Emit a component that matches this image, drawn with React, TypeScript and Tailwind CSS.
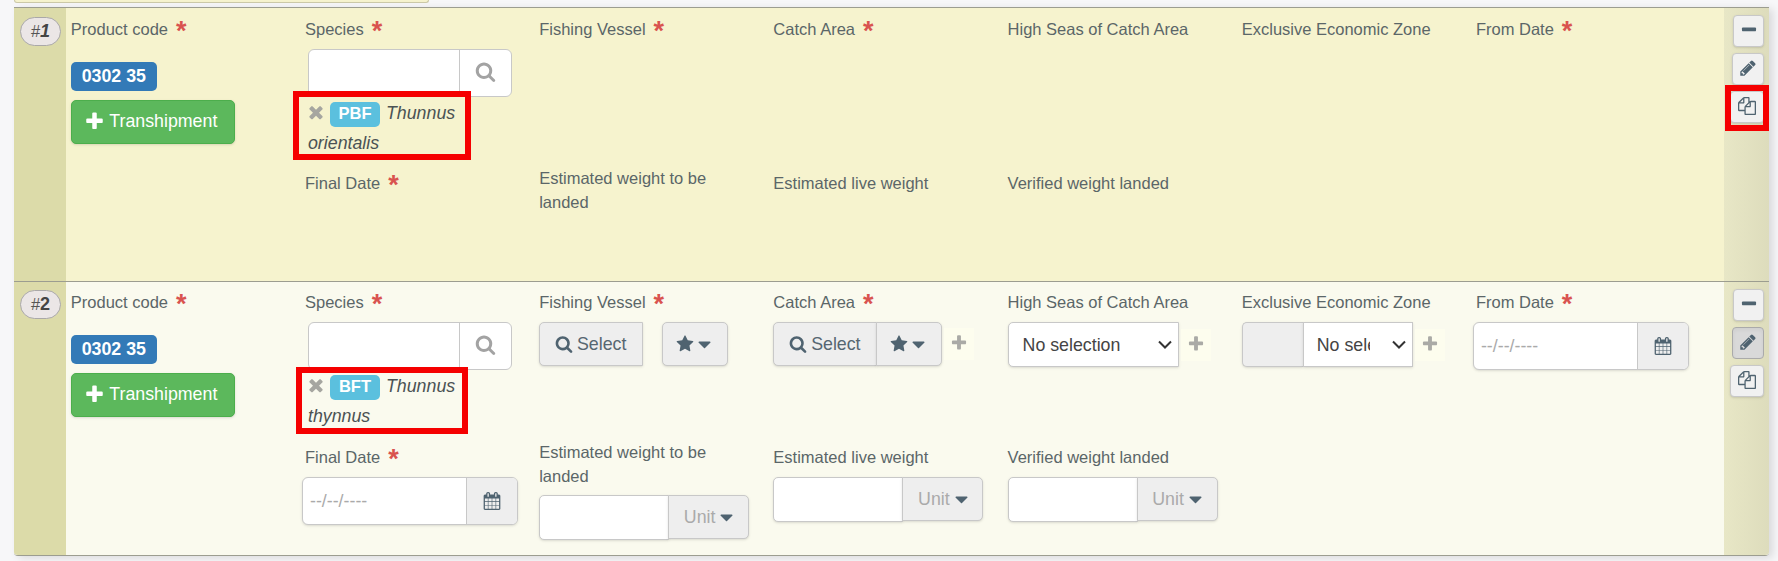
import React from 'react';

const ICONS = {
    search: 'M1216 832q0-185-131.5-316.5t-316.5-131.5-316.5 131.5-131.5 316.5 131.5 316.5 316.5 131.5 316.5-131.5 131.5-316.5zm512 832q0 52-38 90t-90 38q-54 0-90-38l-343-342q-179 124-399 124-143 0-273.5-55.5t-225-150-150-225-55.5-273.5 55.5-273.5 150-225 225-150 273.5-55.5 273.5 55.5 225 150 150 225 55.5 273.5q0 220-124 399l343 343q37 37 37 90z',
    plus: 'M1600 736v192q0 40-28 68t-68 28h-416v416q0 40-28 68t-68 28h-192q-40 0-68-28t-28-68v-416h-416q-40 0-68-28t-28-68v-192q0-40 28-68t68-28h416v-416q0-40 28-68t68-28h192q40 0 68 28t28 68v416h416q40 0 68 28t28 68z',
    minus: 'M1600 736v192q0 40-28 68t-68 28h-1216q-40 0-68-28t-28-68v-192q0-40 28-68t68-28h1216q40 0 68 28t28 68z',
    times: 'M1490 1322q0 40-28 68l-136 136q-28 28-68 28t-68-28l-294-294-294 294q-28 28-68 28t-68-28l-136-136q-28-28-28-68t28-68l294-294-294-294q-28-28-28-68t28-68l136-136q28-28 68-28t68 28l294 294 294-294q28-28 68-28t68 28l136 136q28 28 28 68t-28 68l-294 294 294 294q28 28 28 68z',
    star: 'M1728 647q0 22-26 48l-363 354 86 500q1 7 1 20 0 21-10.5 35.5t-30.5 14.5q-19 0-40-12l-449-236-449 236q-22 12-40 12-21 0-31.5-14.5t-10.5-35.5q0-6 2-20l86-500-364-354q-25-27-25-48 0-37 56-46l502-73 225-455q19-41 49-41t49 41l225 455 502 73q56 9 56 46z',
    pencil: 'M491 1536l91-91-235-235-91 91v107h128v128h107zm523-928q0-22-22-22-10 0-17 7l-542 542q-7 7-7 17 0 22 22 22 10 0 17-7l542-542q7-7 7-17zm-54-192l416 416-832 832h-416v-416zm683 96q0 53-37 90l-166 166-416-416 166-165q36-38 90-38 53 0 91 38l235 234q37 39 37 91z',
    calendar: 'M192 1664h288v-288h-288v288zm352 0h320v-288h-320v288zm-352-352h288v-320h-288v320zm352 0h320v-320h-320v320zm-352-384h288v-288h-288v288zm736 736h320v-288h-320v288zm-384-736h320v-288h-320v288zm768 736h288v-288h-288v288zm-384-352h320v-320h-320v320zm-352-864v-288q0-13-9.5-22.5t-22.5-9.5h-64q-13 0-22.5 9.5t-9.5 22.5v288q0 13 9.5 22.5t22.5 9.5h64q13 0 22.5-9.5t9.5-22.5zm736 864h288v-320h-288v320zm-384-384h320v-288h-320v288zm384 0h288v-288h-288v288zm32-480v-288q0-13-9.5-22.5t-22.5-9.5h-64q-13 0-22.5 9.5t-9.5 22.5v288q0 13 9.5 22.5t22.5 9.5h64q13 0 22.5-9.5t9.5-22.5zm384-64v1280q0 52-38 90t-90 38h-1408q-52 0-90-38t-38-90v-1280q0-52 38-90t90-38h128v-96q0-66 47-113t113-47h64q66 0 113 47t47 113v96h384v-96q0-66 47-113t113-47h64q66 0 113 47t47 113v96h128q52 0 90 38t38 90z',
    copy: 'M1696 384q40 0 68 28t28 68v1216q0 40-28 68t-68 28h-960q-40 0-68-28t-28-68v-288h-544q-40 0-68-28t-28-68v-672q0-40 20-88t48-76l408-408q28-28 76-48t88-20h416q40 0 68 28t28 68v328q68-40 128-40h416zm-544 213l-299 299h299v-299zm-640-384l-299 299h299v-299zm196 647l316-316v-416h-384v416q0 40-28 68t-68 28h-416v640h512v-256q0-40 20-88t48-76zm956 804v-1152h-384v416q0 40-28 68t-68 28h-416v640h896z',
    caret: 'M1408 704q0 26-19 45l-448 448q-19 19-45 19t-45-19l-448-448q-19-19-19-45t19-45 45-19h896q26 0 45 19t19 45z',
};

interface IconProps {
    name: keyof typeof ICONS;
    className?: string;
}

const Icon: React.FC<IconProps> = ({ name, className = 'w-[18px] h-[18px]' }) => (
    <svg viewBox="0 0 1792 1792" fill="currentColor" className={`shrink-0 ${className}`}>
        <path d={ICONS[name]} />
    </svg>
);

const Label: React.FC<{ text: string; required?: boolean; className?: string }> = ({ text, required, className = 'h-[40px] pb-px' }) => (
    <div className={`flex items-center text-[16.5px] leading-6 ${className}`}>
        <span>{text}</span>
        {required && <span className="ml-2 h-6 pt-[2px] text-[27px] leading-6 font-bold text-[#d9534f]">*</span>}
    </div>
);

const PlusButton = () => (
    <button className="ml-[2px] flex h-8 w-[30px] items-center justify-center bg-[#fdfdee] pb-[2px] text-[#aaaaa6]">
        <Icon name="plus" />
    </button>
);

const Chevron = () => (
    <svg viewBox="0 0 14 10" className="h-[10px] w-[14px] shrink-0" fill="none" stroke="#333" strokeWidth="2">
        <path d="M1 1.5l6 6 6-6" />
    </svg>
);

const DateInput = () => (
    <div className="-ml-[3px] flex h-12 w-[216px] overflow-hidden rounded-md border border-[#c8c8c8] bg-white shadow-sm">
        <div className="w-[163px] pt-[11px] pl-[7px] text-[17.8px] leading-6 text-[#aaa]">--/--/----</div>
        <button className="flex flex-1 items-center justify-center border-l border-[#c8c8c8] bg-[#eee] pb-px text-[#4f6370]">
            <Icon name="calendar" />
        </button>
    </div>
);

const WeightInput = () => (
    <div className="flex w-[210px] items-start">
        <div className="h-[45px] w-[130px] rounded-l-[5px] border border-[#c8c8c8] bg-white shadow-sm" />
        <button className="-ml-px flex h-11 flex-1 items-center justify-center gap-px rounded-r-[5px] border border-[#c8c8c8] bg-[#eee] text-[17.8px] text-[#aaa] shadow-sm">
            Unit
            <Icon name="caret" className="-mr-1 h-[21px] w-[21px] text-[#4f6370]" />
        </button>
    </div>
);

const SelectButton: React.FC<{ split?: boolean }> = ({ split }) => (
    <div className="flex text-[#4f6370]">
        <button className="flex h-11 w-[104px] items-center justify-center gap-1 rounded-l-[5px] border border-[#c8c8c8] bg-[#eee] pr-px text-[17.8px] text-[#566671] shadow-sm">
            <Icon name="search" className="h-[18px] w-[18px] text-[#4f6370]" />
            Select
        </button>
        <button className={`flex h-11 w-[66px] items-center justify-center rounded-[5px] border border-[#c8c8c8] bg-[#eee] shadow-sm ${split ? 'ml-[19px]' : '-ml-px rounded-l-none'}`}>
            <Icon name="star" />
            <Icon name="caret" className="h-[21px] w-[21px]" />
        </button>
    </div>
);

interface Species {
    code: string;
    genus: string;
    epithet: string;
}

const SpeciesField: React.FC<{ species: Species; marker: string }> = ({ species, marker }) => (
    <div className="relative pl-[3px] text-[17.8px]">
        <div className="flex h-12 w-[204px] rounded-md border border-[#c8c8c8] bg-white">
            <div className="w-[150px]" />
            <button className="flex flex-1 items-center justify-center border-l border-[#c8c8c8] pb-1 text-[#a3a3a3]">
                <Icon name="search" className="h-[21px] w-[21px]" />
            </button>
        </div>
        <div className="mt-[5px] flex h-[25px] items-center italic text-[#4b5254]">
            <span className="flex w-[22px] items-center pb-[5px] text-[#a6a6a0]">
                <Icon name="times" className="-ml-[2px] h-[20px] w-[20px]" />
            </span>
            <span className="flex h-[25px] w-[50px] items-center justify-center rounded-[5px] bg-[#5bc0de] pb-[2px] text-[16.5px] font-bold text-white not-italic">
                {species.code}
            </span>
            <span className="ml-[6px] pb-[3px]">{species.genus}</span>
        </div>
        <div className="mt-[4px] leading-6 italic text-[#4b5254]">{species.epithet}</div>
        {/* Highlight frame */}
        <div className={`absolute border-[6px] border-[#f50000] ${marker}`} />
    </div>
);

interface RowProps {
    index: number;
    species: Species;
    editing?: boolean;
}

const CatchRow: React.FC<RowProps> = ({ index, species, editing }) => (
    <section className={`flex h-[274px] border-t border-[#9c9d90] ${editing ? 'bg-[#fafaee]' : 'bg-[#f6f3ce]'}`}>
        <div className={`w-[52px] shrink-0 bg-[#dcdba9] pl-[6px] ${editing ? 'pt-2' : 'pt-[9px]'}`}>
            <div className="flex h-[29px] w-[41px] items-center justify-center rounded-full border border-[#aaa8a8] bg-[#ebe6e6] text-[16.5px] text-[#555]">
                #<b className={`text-[18px] text-[#444] ${editing ? '' : 'italic'}`}>{index}</b>
            </div>
        </div>

        <div className={`w-[1658px] shrink-0 pl-[4.8px] ${editing ? '' : 'pt-px'}`}>
            <div className={`grid grid-cols-[repeat(7,234.2px)] ${editing ? 'h-[158px]' : 'h-[157px]'}`}>
                <div>
                    <Label text="Product code" required />
                    <div className="mt-[13px] flex h-[29px] w-[86px] items-center justify-center rounded-[5px] bg-[#337ab7] pb-px text-[17.8px] font-bold text-white">0302 35</div>
                    <button className="mt-[9px] flex h-11 w-[164px] items-center justify-center gap-[4px] rounded-[5px] border border-[#4cae4c] bg-[#5cb85c] pr-1 pb-[2px] text-[17.8px] text-white shadow-sm">
                        <Icon name="plus" className="h-[21px] w-[21px]" />
                        Transhipment
                    </button>
                </div>
                <div>
                    <Label text="Species" required />
                    <SpeciesField
                        species={species}
                        marker={editing ? 'left-[-9px] top-[45px] h-[67px] w-[172px]' : 'left-[-12px] top-[42px] h-[69px] w-[178px]'}
                    />
                </div>
                <div>
                    <Label text="Fishing Vessel" required />
                    {editing && <SelectButton split />}
                </div>
                <div>
                    <Label text="Catch Area" required />
                    {editing && (
                        <div className="flex items-center">
                            <SelectButton />
                            <PlusButton />
                        </div>
                    )}
                </div>
                <div>
                    <Label text="High Seas of Catch Area" />
                    {editing && (
                        <div className="flex items-center">
                            <div className="flex h-[45px] w-[171px] items-center justify-between rounded-l-[5px] border border-[#c8c8c8] bg-white pt-px pr-[6px] pl-[14px] text-[17.8px] text-[#444] shadow-sm">
                                No selection
                                <Chevron />
                            </div>
                            <PlusButton />
                        </div>
                    )}
                </div>
                <div>
                    <Label text="Exclusive Economic Zone" />
                    {editing && (
                        <div className="flex items-center">
                            <div className="h-[45px] w-[61px] rounded-l-[5px] border border-r-0 border-[#c8c8c8] bg-[#eee] shadow-sm" />
                            <div className="flex h-[45px] w-[110px] items-center justify-between border border-[#c8c8c8] bg-white pt-px pr-[6px] pl-[13px] text-[17.8px] text-[#444] shadow-sm">
                                <span className="w-[53px] overflow-hidden whitespace-nowrap">No selection</span>
                                <Chevron />
                            </div>
                            <PlusButton />
                        </div>
                    )}
                </div>
                <div>
                    <Label text="From Date" required />
                    {editing && <DateInput />}
                </div>
            </div>

            <div className="grid grid-cols-[repeat(7,234.2px)]">
                <div />
                <div>
                    <Label text="Final Date" required className="h-[37px] pb-1" />
                    {editing && <DateInput />}
                </div>
                <div>
                    <div className="w-[200px] text-[16.5px] leading-6">Estimated weight to be landed</div>
                    {editing && <div className="mt-[7px]"><WeightInput /></div>}
                </div>
                <div>
                    <Label text="Estimated live weight" className="h-[37px] pb-1" />
                    {editing && <WeightInput />}
                </div>
                <div>
                    <Label text="Verified weight landed" className="h-[37px] pb-1" />
                    {editing && <WeightInput />}
                </div>
            </div>
        </div>

        <div className="relative flex w-[45px] shrink-0 flex-col items-end bg-linear-to-r from-[#e8e7c6] to-[#dddcbc] pt-[7px] pr-[5px] text-[#4f6370]">
            <button className="flex h-8 w-[31px] items-center justify-center rounded-[4px] border border-[#c8c8c8] bg-[#f1f1f1] pb-[3px] shadow-sm">
                <Icon name="minus" />
            </button>
            <button className={`mt-[6px] flex h-8 w-8 items-center justify-center rounded-[4px] border pb-[3px] ${editing ? 'border-[#aaa] bg-[#d9d9d9] shadow-inner' : 'border-[#c8c8c8] bg-[#f1f1f1] shadow-sm'}`}>
                <Icon name="pencil" />
            </button>
            <button className="mt-[6px] flex h-8 w-[34px] items-center justify-center rounded-[4px] border border-[#c8c8c8] bg-[#f1f1f1] pb-[3px] shadow-sm">
                <Icon name="copy" />
            </button>
            {!editing && <div className="absolute top-[77px] left-[1px] h-[46px] w-[44px] border-[6px] border-[#f50000]" />}
        </div>
    </section>
);

const App = () => (
    <div className="h-[561px] w-[1778px] overflow-hidden bg-[#f7f7f9] font-['Liberation_Sans',Arial,sans-serif] text-[#5b6668]">
        <div className="ml-[14px] h-[3px] w-[415px] rounded-b-md border border-t-0 border-[#ccc9a8] bg-[#f6f3ce]" />
        <main className="mt-1 ml-[14px] w-[1755px] overflow-hidden rounded-b-[4px] border-b border-[#9c9d90] shadow-[4px_2px_8px_rgba(0,0,0,0.12)]">
            <CatchRow index={1} species={{ code: 'PBF', genus: 'Thunnus', epithet: 'orientalis' }} />
            <CatchRow index={2} species={{ code: 'BFT', genus: 'Thunnus', epithet: 'thynnus' }} editing />
        </main>
    </div>
);

export default App;
